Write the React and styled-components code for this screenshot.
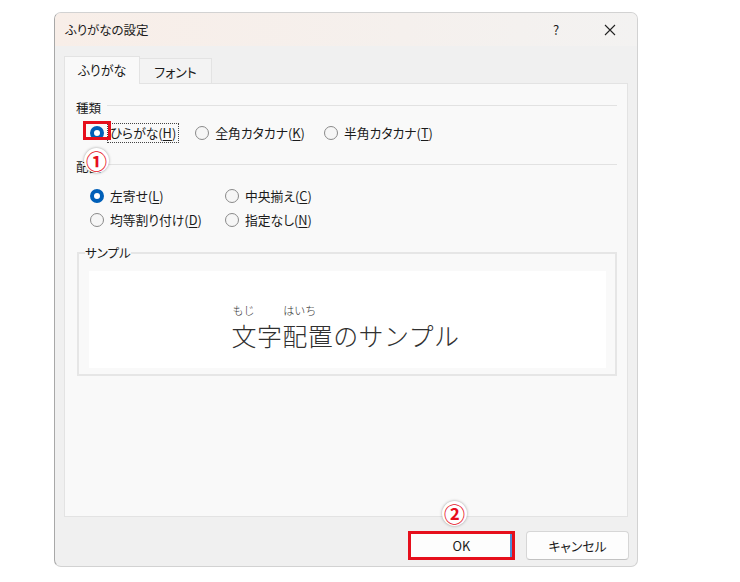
import React from "react";
import styled, { createGlobalStyle } from "styled-components";

/**
 * Styles
 */
const Red = "#e60f1c";
const Blue = "#005fb8";
const LineColor = "#e2e2e2";

const GlobalStyle = createGlobalStyle`
  body {
    margin: 0;
    background: #fff;
    font-family: "Noto Sans CJK JP", "Noto Sans", sans-serif;
  }
`;

const Page = styled.div`
  padding: 12px 0 0 54px;
`;

const Dialog = styled.div`
  width: 584px;
  height: 555px;
  box-sizing: border-box;
  border: 1px solid #d2d2d2;
  border-left-color: #a8a8a8;
  border-radius: 7px;
  background: #f0f0f0;
  display: flex;
  flex-direction: column;
  overflow: hidden;
  color: #1b1b1b;
  font-size: 12.5px;
  font-feature-settings: "palt";
`;

const TitleBar = styled.div`
  height: 33px;
  flex: none;
  display: flex;
  align-items: center;
  padding-left: 10px;
  background: linear-gradient(to right, #f8eee8, #f5f0ed 60%, #f3f2f1);
`;

const Title = styled.div`
  flex: 1;
`;

const TitleButton = styled.div`
  width: 54px;
  height: 33px;
  display: flex;
  align-items: center;
  justify-content: center;
  font-size: 13px;
`;

const Body = styled.div`
  flex: 1;
  display: flex;
  flex-direction: column;
  padding: 10px 9px 6px 9px;
`;

const Tabs = styled.div`
  display: flex;
  height: 27px;
  flex: none;
  align-items: flex-end;
`;

const Tab = styled.div`
  box-sizing: border-box;
  width: ${(p) => (p.$active ? 76 : 72)}px;
  height: ${(p) => (p.$active ? 28 : 25)}px;
  margin-bottom: ${(p) => (p.$active ? -1 : 0)}px;
  position: relative;
  z-index: ${(p) => (p.$active ? 1 : 0)};
  display: flex;
  align-items: center;
  justify-content: center;
  padding-bottom: ${(p) => (p.$active ? 2 : 0)}px;
  font-size: 13px;
  background: ${(p) => (p.$active ? "#f9f9f9" : "#f3f3f3")};
  border: 1px solid #e3e3e3;
  border-bottom: none;
  border-left-width: ${(p) => (p.$active ? 1 : 0)}px;
`;

const Panel = styled.div`
  flex: 1;
  background: #f9f9f9;
  border: 1px solid #e3e3e3;
  padding: 15px 10px 0 11px;
  display: flex;
  flex-direction: column;
`;

const GroupHeader = styled.div`
  display: flex;
  align-items: center;
  gap: 6px;
  height: 16px;
  margin-top: ${(p) => p.$top || 0}px;
`;

const GroupLine = styled.div`
  flex: 1;
  height: 1px;
  background: ${LineColor};
  margin-bottom: 3px;
`;

const RadioRow = styled.div`
  display: flex;
  align-items: center;
  gap: 17px;
  height: 20px;
  margin-top: 8px;
  padding-left: 14px;
`;

const RadioGrid = styled.div`
  display: grid;
  grid-template-columns: 135px auto;
  grid-auto-rows: 20px;
  row-gap: 4px;
  margin-top: 12px;
  padding-left: 14px;
`;

const RadioItem = styled.div`
  display: flex;
  align-items: center;
  gap: 4px;
  position: relative;
`;

const Circle = styled.span`
  box-sizing: border-box;
  width: 14px;
  height: 14px;
  border-radius: 50%;
  flex: none;
  position: relative;
  background: ${(p) => (p.$checked ? "#fff" : "#f6f6f6")};
  border: ${(p) => (p.$checked ? `4px solid ${Blue}` : "1px solid #8a8a8a")};

  ${(p) =>
    p.$marked &&
    `
    &::after {
      content: "";
      position: absolute;
      left: -11px;
      top: -9px;
      width: 22px;
      height: 13px;
      border: 3px solid ${Red};
    }
  `}
`;

const RadioLabel = styled.span`
  padding: 0 2px;
  line-height: 18px;
  font-size: 12.8px;
  outline: ${(p) => (p.$focus ? "1px dotted #444" : "none")};
  outline-offset: 0;

  u {
    text-underline-offset: 2px;
  }
`;

const Badge = styled.span`
  position: absolute;
  z-index: 3;
  width: 25px;
  height: 25px;
  border-radius: 50%;
  background: #fff;
  box-shadow: 0 0 3px rgba(0, 0, 0, 0.35);
  display: flex;
  align-items: center;
  justify-content: center;
  color: ${Red};
  font-size: 21px;
  font-weight: 700;
  line-height: 1;
  font-feature-settings: normal;
  left: ${(p) => p.$left}px;
  top: ${(p) => p.$top}px;
`;

const SampleBox = styled.fieldset`
  margin: 15px 0 0 1px;
  padding: 10px 9px 6px 10px;
  border: 2px solid #e6e6e6;
  min-width: 0;
`;

const Legend = styled.legend`
  padding: 0;
  margin-left: -4px;
  line-height: 16px;
`;

const SampleArea = styled.div`
  height: 97px;
  background: #fff;
  display: flex;
  justify-content: center;
  align-items: flex-start;
  padding-top: 33px;
  padding-right: 4px;
  box-sizing: border-box;
`;

const SampleText = styled.div`
  display: flex;
  align-items: flex-end;
  color: #303030;
  font-weight: 300;
  font-feature-settings: normal;
`;

const RubyWord = styled.span`
  display: inline-flex;
  flex-direction: column;
  align-items: flex-start;
`;

const Rt = styled.span`
  font-size: 11px;
  line-height: 12px;
  margin-bottom: 5px;
  padding-left: 1px;
`;

const Base = styled.span`
  font-size: 25px;
  line-height: 28px;
  letter-spacing: 0.4px;
`;

const Footer = styled.div`
  display: flex;
  justify-content: flex-end;
  gap: 11px;
  margin-top: 14px;
  margin-right: -1px;
`;

const Button = styled.button`
  box-sizing: border-box;
  position: relative;
  width: ${(p) => (p.$marked ? 107 : 103)}px;
  height: 29px;
  font-family: inherit;
  font-size: 12.8px;
  font-feature-settings: "palt";
  color: #1b1b1b;
  background: #fdfdfd;
  border: 1px solid #d6d6d6;
  border-bottom-color: #c2c2c2;
  border-radius: 4px;
  padding: 0;
  ${(p) =>
    p.$marked &&
    `
    border: 3px solid ${Red};
    border-radius: 0;
    box-shadow: inset -2px 0 0 #4b8fd6;
  `}
`;

const CloseIcon = () => (
  <svg width="12" height="12" viewBox="0 0 12 12">
    <path d="M1 1 L11 11 M11 1 L1 11" stroke="#222" strokeWidth="1.1" />
  </svg>
);

const Radio = ({ checked, marked, focus, children, badge }) => (
  <RadioItem>
    <Circle $checked={checked} $marked={marked} />
    <RadioLabel $focus={focus}>{children}</RadioLabel>
    {badge}
  </RadioItem>
);

const App = () => (
  <Page>
    <GlobalStyle />
    <Dialog>
      <TitleBar>
        <Title>ふりがなの設定</Title>
        <TitleButton>?</TitleButton>
        <TitleButton>
          <CloseIcon />
        </TitleButton>
      </TitleBar>
      <Body>
        <Tabs>
          <Tab $active>ふりがな</Tab>
          <Tab>フォント</Tab>
        </Tabs>
        <Panel>
          <GroupHeader>
            <span>種類</span>
            <GroupLine />
          </GroupHeader>
          <RadioRow>
            <Radio
              checked
              marked
              focus
              badge={
                <Badge $left={-6} $top={24}>
                  ①
                </Badge>
              }
            >
              ひらがな(<u>H</u>)
            </Radio>
            <Radio>
              全角カタカナ(<u>K</u>)
            </Radio>
            <Radio>
              半角カタカナ(<u>T</u>)
            </Radio>
          </RadioRow>
          <GroupHeader $top={15}>
            <span>配置</span>
            <GroupLine />
          </GroupHeader>
          <RadioGrid>
            <Radio checked>
              左寄せ(<u>L</u>)
            </Radio>
            <Radio>
              中央揃え(<u>C</u>)
            </Radio>
            <Radio>
              均等割り付け(<u>D</u>)
            </Radio>
            <Radio>
              指定なし(<u>N</u>)
            </Radio>
          </RadioGrid>
          <SampleBox>
            <Legend>サンプル</Legend>
            <SampleArea>
              <SampleText>
                <RubyWord>
                  <Rt>もじ</Rt>
                  <Base>文字</Base>
                </RubyWord>
                <RubyWord>
                  <Rt>はいち</Rt>
                  <Base>配置</Base>
                </RubyWord>
                <Base>のサンプル</Base>
              </SampleText>
            </SampleArea>
          </SampleBox>
        </Panel>
        <Footer>
          <Button $marked>
            OK
            <Badge $left={31} $top={-33}>
              ②
            </Badge>
          </Button>
          <Button>キャンセル</Button>
        </Footer>
      </Body>
    </Dialog>
  </Page>
);

export default App;
